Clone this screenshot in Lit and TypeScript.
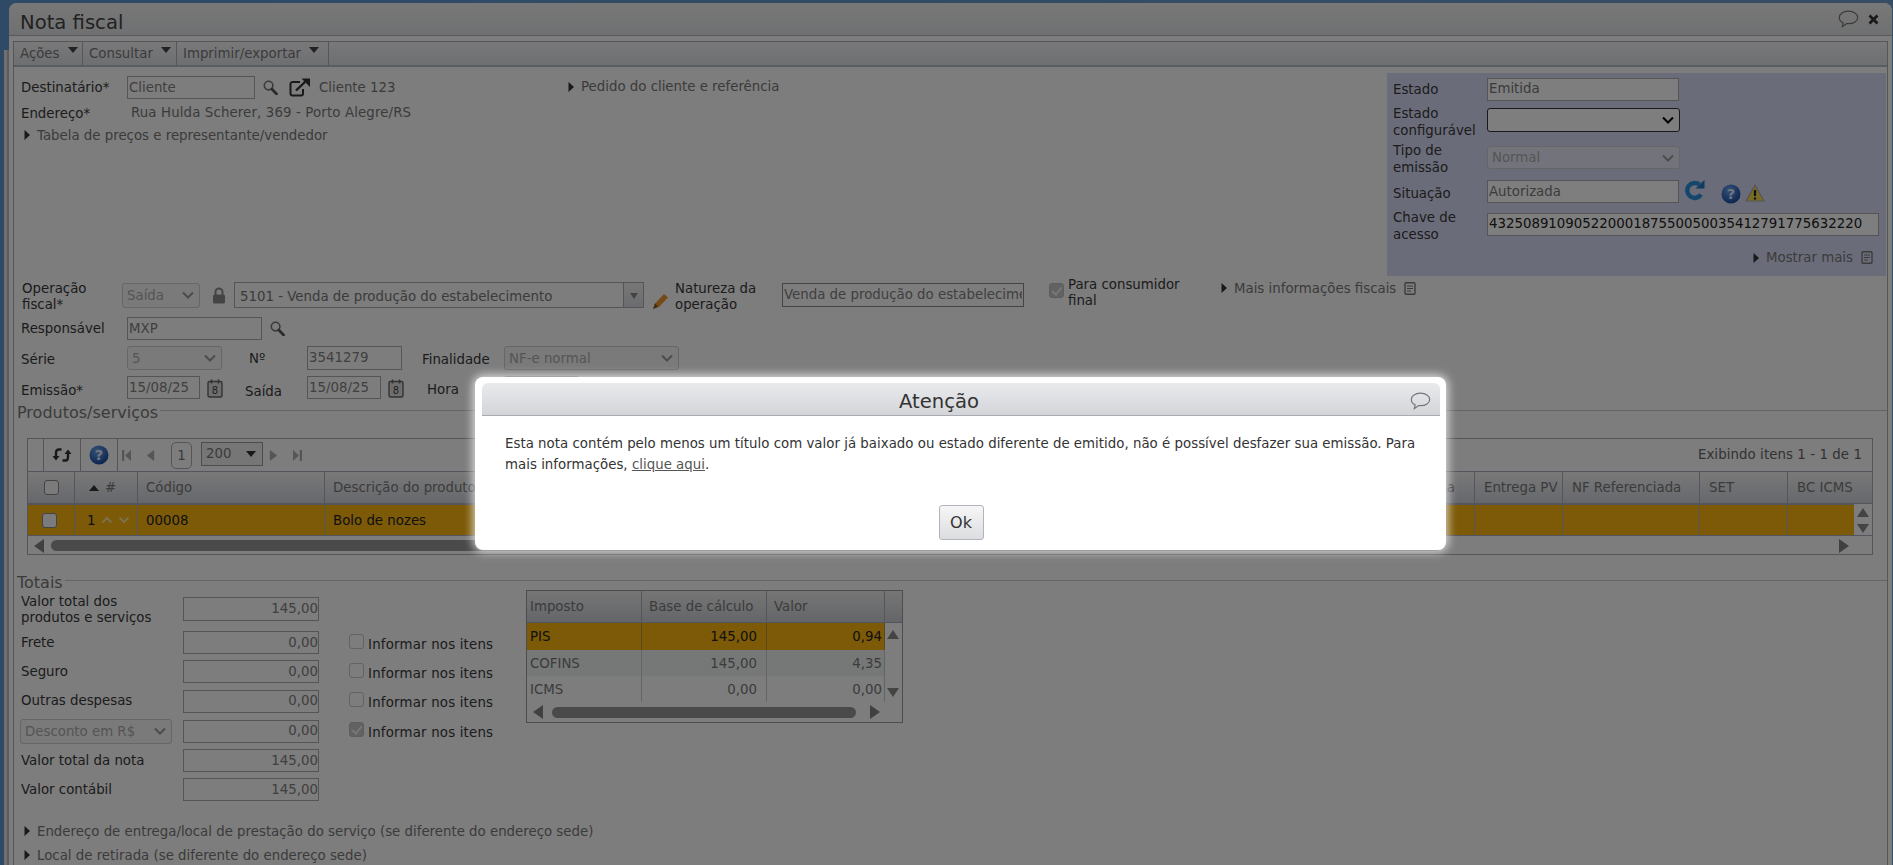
import { LitElement, html, css } from "lit";
import { customElement } from "lit/decorators.js";

const tri = html`<svg class="tri" viewBox="0 0 6 10"><path d="M0.5 0 L6 5 L0.5 10Z" /></svg>`;
const search = html`<svg class="search" viewBox="0 0 15 15"><circle cx="5.6" cy="5.6" r="4.3" fill="none" stroke="#777" stroke-width="1.6" /><path d="M8.8 9 L13.6 14" stroke="#555" stroke-width="2.6" stroke-linecap="round" /></svg>`;
const doc = html`<svg class="doc" viewBox="0 0 12 13"><rect x="1" y="0.8" width="10" height="11.4" rx="1" fill="none" stroke="#777" stroke-width="1.4" /><path d="M3 4h6M3 6.5h6M3 9h4" stroke="#777" stroke-width="1.1" /></svg>`;
const cal = html`<svg class="cal" viewBox="0 0 16 19"><rect x="1" y="2.5" width="14" height="15.5" rx="1.5" fill="#ddd" stroke="#666" stroke-width="1.4" /><path d="M4.5 0.5v4M11.5 0.5v4" stroke="#666" stroke-width="1.6" /><text x="8" y="15" text-anchor="middle" font-size="10" font-family="DejaVu Sans" fill="#444">8</text></svg>`;
const bubble = html`<svg class="bubble" viewBox="0 0 21 18"><path d="M10.500 1.200C5.400 1.200 1.300 3.800 1.300 7.500c0 2.400 1.600 4.300 3.800 5.400l-0.800 3.700 4.400-3c.6.100 1.200.1 1.800.1 5.100 0 9.200-2.700 9.200-6.200S15.600 1.200 10.500 1.200z" fill="none" stroke="#777" stroke-width="1.200" /></svg>`;
const gridArrow = (d: string, cls: string) => html`<svg class=${cls} viewBox="0 0 10 10" preserveAspectRatio="none"><path d=${d} /></svg>`;

@customElement("app-root")
export class AppRoot extends LitElement {
  static styles = css`
    :host { display: block; width: 1893px; height: 865px; overflow: hidden; position: relative; font-family: "DejaVu Sans", sans-serif; font-size: 13.33px; color: #3a3a3a; }
    * { box-sizing: border-box; }
    .page { height: 865px; padding: 3px 1px 0 9px; background: linear-gradient(90deg, #5f94cc 0, #5f94cc 4px, #e0e0e0 4px, #e0e0e0 7px, #b8b8b8 7px, #b8b8b8 9px) 0 50px / 9px 100% no-repeat, linear-gradient(90deg, #5c94cc, #6f9bc8); }
    .window { height: 862px; background: #fafafa; border-radius: 8px 8px 0 0; display: flex; flex-direction: column; }
    .titlebar { height: 33px; flex: none; display: flex; align-items: center; justify-content: space-between; padding: 6px 13px 0 11px; background: linear-gradient(#f0f0f0, #dfe0e3); border-bottom: 1px solid #b0b3b8; border-radius: 8px 8px 0 0; }
    .title { font-size: 19.6px; color: #444; }
    .winicons { display: flex; align-items: center; gap: 9px; margin-top: -6px; }
    .bubble { width: 21px; height: 18px; display: block; }
    .x { width: 11px; height: 11px; display: block; }
    .content { flex: 1; margin: 5px 4px 0; border: 1px solid #aaadb4; border-bottom: 0; overflow: hidden; }
    .menubar { height: 25px; display: flex; background: linear-gradient(#f2f2f4, #dcdee2); border-bottom: 2px solid #b4b9c8; }
    .menu { display: flex; align-items: center; padding: 0 0 0 6px; border-right: 1px solid #a8acb6; color: #777; }
    .m1 { width: 69px; } .m2 { width: 94px; } .m3 { width: 152px; }
    .caret { width: 0; height: 0; border: 5px solid transparent; border-top: 6px solid #444; margin: -2px 0 0 8px; }
    input, select { font-family: "DejaVu Sans", sans-serif; font-size: 13.33px; }
    input { height: 23px; border: 1px solid #aaa; background: transparent; color: #808080; padding: 0 1px 1px; border-radius: 0; outline: 0; display: block; }
    select { display: block; color: #aaa; padding: 0 0 0 4px; height: 25px; appearance: none; -webkit-appearance: none; border: 1px solid #ccc; border-radius: 3px; background: #f4f4f4 url("data:image/svg+xml,%3Csvg xmlns='http://www.w3.org/2000/svg' width='12' height='8'%3E%3Cpath d='M1 1.500 6 6.500 11 1.500' fill='none' stroke='%23999' stroke-width='2'/%3E%3C/svg%3E") no-repeat right 5px center; opacity: 1; }
    .top { display: flex; height: 203px; margin: 6px 1px 0 0; }
    .topleft { flex: 1; padding: 3px 0 0 7px; }
    .row { display: flex; align-items: center; }
    .rowdest { height: 23px; }
    .destgroup { display: flex; align-items: center; width: 547px; }
    .lbl { width: 106px; flex: none; color: #383838; line-height: 16px; }
    .val { color: #777; }
    .icon-gap { margin-left: 8px; }
    .search { width: 15px; height: 15px; display: block; }
    .open { width: 21px; height: 19px; margin: 0 9px 0 11px; display: block; }
    .tri { width: 6px; height: 10px; flex: none; display: block; fill: #333; margin-right: 7px; }
    .link { display: flex; align-items: center; color: #777; }
    .pedido { margin-top: -2px; }
    .rowaddr { height: 18px; margin-top: 5px; }
    .rowaddr .lbl { padding-top: 2px; }
    .addr { margin: -1px 0 0 4px; letter-spacing: 0.13px; }
    .rowtab { height: 18px; margin: 4px 0 0 3px; }
    .w128 { width: 128px; } .w135 { width: 135px; } .w95 { width: 95px; } .w73 { width: 73px; } .w74 { width: 74px; }
    .panel { width: 499px; flex: none; background: #d6d9f2; display: grid; grid-template-columns: 94px 1fr; grid-template-rows: 30px 32px 43px 25px 40px 1fr; padding: 1px 0 0 6px; align-items: center; }
    .panel .lbl { line-height: 17px; padding-top: 3px; }
    .panel .lbl.one { padding-top: 1px; }
    .panel input { background: #fcfcfe; width: 192px; color: #777; }
    .panel select { width: 193px; }
    .panel select.on { height: 24px; border: 1px solid #333; border-radius: 3px; color: #000; background-color: #fcfcfe; background-image: url("data:image/svg+xml,%3Csvg xmlns='http://www.w3.org/2000/svg' width='12' height='8'%3E%3Cpath d='M1 1.500 6 6.500 11 1.500' fill='none' stroke='%23000' stroke-width='2'/%3E%3C/svg%3E"); }
    .panel select.off { height: 23px; background-color: #e6e8f6; }
    .panel .key { width: 392px; color: #222; }
    .sit { display: flex; align-items: center; }
    .refresh { width: 21px; height: 21px; margin: -3px 0 0 5px; display: block; }
    .help { width: 20px; height: 20px; display: block; }
    .sit .help { margin: 4px 0 0 16px; }
    .warn { width: 20px; height: 18px; margin: 2px 0 0 4px; display: block; }
    .more { grid-column: 1 / 3; justify-self: end; align-self: start; margin: 6px 13px 0 0; display: flex; align-items: center; }
    .doc { width: 12px; height: 13px; display: block; margin-left: 8px; }
    .rowop { height: 26px; margin: 6px 0 0 7px; }
    .rowop .lbl { padding-top: 3px; }
    .oplbl { padding-left: 1px; width: 101px; }
    .saida { width: 78px; height: 25px; }
    .lock { width: 14px; height: 17px; margin: 0 8px 0 12px; display: block; }
    .combo { width: 410px; height: 26px; border: 1px solid #aaa; display: flex; background: #fafafa; }
    .combotxt { flex: 1; padding: 2px 5px 0; display: flex; align-items: center; color: #777; }
    .comboarrow { width: 20px; border-left: 1px solid #aaa; background: linear-gradient(#eee, #d8dae0); display: flex; align-items: center; justify-content: center; }
    .comboarrow i { border: 4px solid transparent; border-top: 6px solid #888; margin-top: 5px; }
    .pencil { width: 18px; height: 17px; margin: 12px 5px 0 8px; display: block; }
    .natlbl { width: 107px; color: #383838; line-height: 16px; padding-top: 3px; }
    .natinput { width: 242px; height: 24px; color: #808080; border-color: #888; }
    .chk { width: 15px; height: 15px; flex: none; border: 1px solid #888; border-radius: 3px; background: #f6f6f6; display: block; }
    .chk.dis { border-color: #c4c4c4; background: transparent; }
    .chk.checked { background: #c4c4c4; border-color: #bbb; position: relative; }
    .chk.checked::after { content: ""; position: absolute; left: 4px; top: 1px; width: 4px; height: 8px; border: solid #efefef; border-width: 0 2px 2px 0; transform: rotate(40deg); }
    .chkwrap { margin: 2px 0 0 25px; display: flex; align-items: flex-start; }
    .consum { width: 152px; margin-left: 4px; line-height: 16px; margin-top: -6px; color: #383838; }
    .mais { margin: -14px 0 0 1px; }
    .rowresp { height: 23px; margin: 9px 0 0 7px; }
    .rowserie { height: 24px; margin: 6px 0 0 7px; }
    .rowserie .lbl, .rowserie .final { padding-top: 3px; }
    .serie { width: 95px; height: 24px; }
    .no { width: 58px; margin-left: 27px; color: #383838; }
    .input24 { height: 24px; }
    .final { width: 82px; margin-left: 20px; color: #383838; }
    .nfe { width: 175px; height: 24px; }
    .rowemis { height: 23px; margin: 6px 0 0 7px; }
    .rowemis .lbl { padding-top: 7px; }
    .cal { width: 16px; height: 19px; margin: 2px 0 0 7px; display: block; flex: none; }
    .saidalbl { margin-left: 22px; width: 62px; color: #383838; padding-top: 7px; }
    .hora { margin-left: 23px; width: 78px; color: #383838; padding-top: 3px; }
    .legend { height: 18px; display: flex; align-items: center; gap: 2px; color: #777; font-size: 16px; padding-left: 3px; }
    .legend hr { flex: 1; height: 1px; border: 0; margin: -3px 0 0; background: #c8c8c8; }
    .lg1 { margin-top: 4px; }
    .lg2 { margin-top: 18px; }
    .grid { width: 1846px; height: 117px; margin: 17px 0 0 13px; border: 1px solid #aaa; }
    .gtool { height: 32px; display: flex; align-items: stretch; position: relative; }
    .gsep { width: 37px; border-left: 1px solid #aaa; display: flex; align-items: center; justify-content: center; flex: none; }
    .gsep0 { width: 15px; flex: none; }
    .gsync { width: 18px; height: 16px; display: block; }
    .ghelp { width: 20px; height: 20px; display: block; }
    .pg { display: flex; align-items: center; border-left: 1px solid #aaa; padding-left: 4px; flex: 1; }
    .pgicon { width: 9px; height: 11px; fill: #aaa; display: block; flex: none; }
    .mr { margin-right: 15px; }
    .pgbox { width: 21px; height: 27px; border: 1px solid #aaa; border-radius: 5px; display: flex; align-items: center; justify-content: center; color: #777; margin: 0 9px 0 16px; }
    .pgsel { width: 62px; height: 24px; border: 1px solid #999; display: flex; align-items: center; justify-content: space-between; padding: 0 6px 2px 4px; color: #777; margin: -2px 6px 0 0; background: #ececec; }
    .pgsel i { border: 5px solid transparent; border-top: 6px solid #333; margin-top: 6px; }
    .count { margin: 0 10px 0 auto; color: #666; padding-bottom: 1px; letter-spacing: 0.08px; }
    .ghead, .grow { display: flex; }
    .ghead { height: 33px; background: linear-gradient(#f2f2f2, #ccd0d8); border-top: 1px solid #aab; border-bottom: 1px solid #aab; color: #777; }
    .grow { height: 32px; background: #f8b410; color: #222; }
    .cell { flex: none; border-right: 1px solid #b0a080; display: flex; align-items: center; padding-left: 8px; overflow: hidden; white-space: nowrap; }
    .ghead .cell { border-right-color: #aab; }
    .c0 { width: 47px; padding-left: 16px; }
    .grow .c0 { padding-left: 14px; }
    .c1 { width: 63px; }
    .c2 { width: 187px; }
    .c3 { width: 1005px; }
    .c4 { width: 145px; justify-content: flex-end; padding-right: 19px; }
    .c5 { width: 88px; padding-left: 9px; }
    .c6 { width: 137px; padding-left: 9px; }
    .c7 { width: 88px; padding-left: 9px; }
    .c8 { width: 66px; border-right: 0; padding-left: 9px; }
    .hfill { flex: 1; }
    .sorttri { width: 0; height: 0; border: 5px solid transparent; border-bottom: 6px solid #333; border-top: 0; margin: 1px 6px 0 6px; }
    .grow .c1 { padding-left: 12px; }
    .chev { width: 10px; height: 6px; margin-left: 7px; display: block; fill: none; stroke: #f4e6b4; stroke-width: 1.7; flex: none; }
    .vfill { flex: 1; position: relative; display: flex; flex-direction: column; align-items: center; gap: 7px; padding-top: 4px; background: #fafafa; margin-top: -1px; }
    .varrow { width: 12px; height: 9px; fill: #888; display: block; flex: none; }
    .gscroll { height: 19px; display: flex; align-items: center; position: relative; padding-left: 6px; }
    .harrow { width: 10px; height: 14px; fill: #808080; display: block; flex: none; }
    .thumb { height: 11px; background: #949494; border-radius: 6px; flex: none; }
    .t1 { width: 1390px; margin: 0 398px 0 7px; }
    .t2 { width: 304px; margin: 0 14px 0 9px; }
    .totals { display: flex; margin: -1px 0 0 7px; position: relative; height: 224px; }
    .tform { display: grid; grid-template-columns: 162px 136px 30px 177px; grid-template-rows: 30px 29px 29px 30px 30px 29px 29px; align-items: center; padding-top: 8px; height: 221px; }
    .tform .lbl { width: auto; }
    .tform input { width: 136px; height: 23px; text-align: right; padding-right: 0; }
    .first { align-self: start; margin-top: -4px; }
    .tform input.first { height: 24px; margin-top: -1px; }
    .inf { display: flex; align-items: center; gap: 4px; color: #383838; padding-top: 3px; white-space: nowrap; letter-spacing: 0.2px; }
    .inf .chk { margin-top: -6px; }
    .tdisc { width: 152px; height: 25px; margin-left: -1px; }
    .mini { width: 377px; height: 133px; border: 1px solid #999; flex: none; }
    .mhead, .mrow { display: flex; }
    .mhead { height: 32px; background: linear-gradient(#ececec, #c8ccd2); border-bottom: 1px solid #aab; color: #777; }
    .mrow { height: 26px; color: #777; }
    .mrows { display: flex; }
    .mleft { width: 357px; }
    .mcell { flex: none; border-right: 1px solid #c8c8c8; display: flex; align-items: center; padding: 0 5px 0 3px; }
    .mhead .mcell { border-right-color: #aab; }
    .m0 { width: 115px; } .m1c { width: 125px; justify-content: flex-end; padding-right: 9px; } .m2c { width: 118px; justify-content: flex-end; padding-right: 2px; }
    .mhead .m1c, .mhead .m2c { justify-content: flex-start; padding-left: 7px; }
    .mrow.sel { background: #f8b410; color: #222; height: 27px; }
    .mrow.sel .mcell { border-right-color: #b89030; }
    .mrow.alt { background: #edf0ee; }
    .mvs { flex: 1; display: flex; flex-direction: column; justify-content: space-between; align-items: center; padding: 7px 0 5px; height: 79px; }
    .mscroll { height: 20px; display: flex; align-items: center; padding-left: 6px; }
    .bottom { height: 18px; margin: 8px 0 0 10px; }
    .bottom2 { height: 18px; margin: 6px 0 0 10px; }
    .overlay { position: absolute; inset: 0; background: rgba(0, 0, 0, 0.5); }
    .dialog { position: absolute; left: 475px; top: 377px; width: 971px; height: 173px; background: #fff; border-radius: 8px; box-shadow: 0 0 10px 2px rgba(255, 255, 255, 0.75); padding: 6px 6px 0 7px; display: flex; flex-direction: column; }
    .dhead { height: 33px; flex: none; background: linear-gradient(#e9eaec, #d3d5d9); border-bottom: 1px solid #a8abb4; border-radius: 6px 6px 0 0; position: relative; display: flex; align-items: center; justify-content: center; font-size: 19.6px; color: #333; padding: 5px 44px 0 0; }
    .dbubble { position: absolute; right: 9px; top: 9px; }
    .dtext { padding: 17px 22px 0 23px; line-height: 21px; color: #333; height: 88px; letter-spacing: 0.02px; }
    .dtext a { color: #555; text-decoration: underline; }
    .dbtn { align-self: center; width: 45px; height: 35px; margin-top: 1px; border: 1px solid #b0b4bc; border-radius: 3px; background: linear-gradient(#f6f6f6, #dcdde0); display: flex; align-items: center; justify-content: center; font-family: "DejaVu Sans", sans-serif; font-size: 16px; color: #333; }
  `;

  private sync() {
    return html`<svg class="gsync" viewBox="0 0 18 16" fill="none" stroke="#333" stroke-width="2.400"><path d="M8.500 2.500H5.500C3.700 2.500 3 4 3 6v5" /><path d="M-0.500 9 3 13.500 6.500 9z" fill="#333" stroke="none" /><path d="M9.500 13.500h3c1.800 0 2.500-1.500 2.500-3.500V5" /><path d="M11.500 7 15 2.500 18.500 7z" fill="#333" stroke="none" /></svg>`;
  }

  private helpIcon(cls: string) {
    return html`<svg class=${cls} viewBox="0 0 20 20"><defs><radialGradient id="hg" cx="40%" cy="30%" r="75%"><stop offset="0" stop-color="#6da4ee" /><stop offset="1" stop-color="#12459e" /></radialGradient></defs><circle cx="10" cy="10" r="9.500" fill="url(#hg)" /><text x="10" y="15" text-anchor="middle" font-size="14" font-weight="bold" font-family="DejaVu Sans" fill="#e8eefa">?</text></svg>`;
  }

  render() {
    const totalRows = [
      { label: "Frete", value: "0,00" },
      { label: "Seguro", value: "0,00" },
      { label: "Outras despesas", value: "0,00" },
    ];
    return html`
      <div class="page">
        <div class="window">
          <div class="titlebar">
            <span class="title">Nota fiscal</span>
            <div class="winicons">
              ${bubble}
              <svg class="x" viewBox="0 0 11 11"><path d="M1.500 1.500l8 8M9.500 1.500l-8 8" stroke="#333" stroke-width="2.800" /></svg>
            </div>
          </div>
          <div class="content">
            <div class="menubar">
              <div class="menu m1">Ações<span class="caret"></span></div>
              <div class="menu m2">Consultar<span class="caret"></span></div>
              <div class="menu m3">Imprimir/exportar<span class="caret"></span></div>
            </div>

            <div class="top">
              <div class="topleft">
                <div class="row rowdest">
                  <div class="destgroup">
                    <span class="lbl">Destinatário*</span>
                    <input class="w128" value="Cliente" readonly />
                    <span class="icon-gap">${search}</span>
                    <svg class="open" viewBox="0 0 21 19" fill="none" stroke="#333" stroke-width="2"><path d="M11 4H3.500A2 2 0 0 0 1.500 6v9.500a2 2 0 0 0 2 2H12a2 2 0 0 0 2-2V11" /><path d="M7 12.500 17 3" stroke-width="2.400" /><path d="M12.500 0.500H21V9z" fill="#333" stroke="none" /></svg>
                    <span class="val">Cliente 123</span>
                  </div>
                  <span class="link pedido">${tri}Pedido do cliente e referência</span>
                </div>
                <div class="row rowaddr">
                  <span class="lbl">Endereço*</span>
                  <span class="val addr">Rua Hulda Scherer, 369 - Porto Alegre/RS</span>
                </div>
                <div class="row rowtab link">${tri}Tabela de preços e representante/vendedor</div>
              </div>
              <div class="panel">
                <span class="lbl one">Estado</span>
                <input value="Emitida" readonly />
                <span class="lbl">Estado<br />configurável</span>
                <select class="on"><option></option></select>
                <span class="lbl">Tipo de<br />emissão</span>
                <select class="off" disabled><option>Normal</option></select>
                <span class="lbl">Situação</span>
                <div class="sit">
                  <input value="Autorizada" readonly />
                  <svg class="refresh" viewBox="0 0 21 21"><path d="M17 14.500A7.500 7.500 0 1 1 15.500 4.600" fill="none" stroke="#2b8fd8" stroke-width="4.500" /><path d="M11.500 8.500H20.500V0z" fill="#1f78c0" /></svg>
                  ${this.helpIcon("help")}
                  <svg class="warn" viewBox="0 0 20 18"><path d="M10 1 19 17H1z" fill="#f2d64a" stroke="#aaa" stroke-width="1.200" /><path d="M10 6v6" stroke="#222" stroke-width="2.200" /><circle cx="10" cy="14.500" r="1.200" fill="#222" /></svg>
                </div>
                <span class="lbl">Chave de<br />acesso</span>
                <input class="key" value="43250891090522000187550050035412791775632220" readonly />
                <div class="more link">${tri}Mostrar mais${doc}</div>
              </div>
            </div>

            <div class="row rowop">
              <span class="lbl oplbl">Operação<br />fiscal*</span>
              <select class="saida" disabled><option>Saída</option></select>
              <svg class="lock" viewBox="0 0 14 17"><path d="M3.500 8V5a3.500 3.500 0 0 1 7 0v3" fill="none" stroke="#888" stroke-width="2" /><rect x="1" y="7.500" width="12" height="9" rx="1.500" fill="#888" /></svg>
              <div class="combo">
                <span class="combotxt">5101 - Venda de produção do estabelecimento</span>
                <span class="comboarrow"><i></i></span>
              </div>
              <svg class="pencil" viewBox="0 0 18 17"><path d="M1 16 3 10.500 12 1l4 3.500-9 9.500z" fill="#e8962e" /><path d="M1 16 3 10.500 6 13.500z" fill="#7a5a2a" /></svg>
              <span class="natlbl">Natureza da<br />operação</span>
              <input class="natinput" value="Venda de produção do estabelecimento" readonly />
              <div class="chkwrap">
                <span class="chk checked"></span>
                <span class="consum">Para consumidor<br />final</span>
              </div>
              <div class="link mais">${tri}Mais informações fiscais${doc}</div>
            </div>

            <div class="row rowresp">
              <span class="lbl">Responsável</span>
              <input class="w135" value="MXP" readonly />
              <span class="icon-gap">${search}</span>
            </div>

            <div class="row rowserie">
              <span class="lbl">Série</span>
              <select class="serie" disabled><option>5</option></select>
              <span class="no">Nº</span>
              <input class="w95 input24" value="3541279" readonly />
              <span class="final">Finalidade</span>
              <select class="nfe" disabled><option>NF-e normal</option></select>
            </div>

            <div class="row rowemis">
              <span class="lbl">Emissão*</span>
              <input class="w73" value="15/08/25" readonly />
              ${cal}
              <span class="saidalbl">Saída</span>
              <input class="w74" value="15/08/25" readonly />
              ${cal}
              <span class="hora">Hora</span>
              <input class="w73" readonly />
            </div>

            <div class="legend lg1">Produtos/serviços<hr /></div>

            <div class="grid">
              <div class="gtool">
                <span class="gsep0"></span>
                <span class="gsep">${this.sync()}</span>
                <span class="gsep">${this.helpIcon("ghelp")}</span>
                <div class="pg">
                  ${gridArrow("M0 0h2.500v10H0zM10 0v10L3.500 5z", "pgicon mr")}
                  ${gridArrow("M9 0v10L1 5z", "pgicon")}
                  <span class="pgbox">1</span>
                  <span class="pgsel">200<i></i></span>
                  ${gridArrow("M1 0v10l8-5z", "pgicon mr")}
                  ${gridArrow("M0 0v10l6.500-5zM7.500 0H10v10H7.500z", "pgicon")}
                  <span class="count">Exibindo itens 1 - 1 de 1</span>
                </div>
              </div>
              <div class="ghead">
                <span class="cell c0"><span class="chk"></span></span>
                <span class="cell c1"><span class="sorttri"></span>#</span>
                <span class="cell c2">Código</span>
                <span class="cell c3">Descrição do produto</span>
                <span class="cell c4">Entrega</span>
                <span class="cell c5">Entrega PV</span>
                <span class="cell c6">NF Referenciada</span>
                <span class="cell c7">SET</span>
                <span class="cell c8">BC ICMS</span>
                <span class="hfill"></span>
              </div>
              <div class="ghead grow">
                <span class="cell c0"><span class="chk"></span></span>
                <span class="cell c1">1
                  <svg class="chev" viewBox="0 0 10 6"><path d="M0.500 5.500 5 1l4.500 4.500" /></svg>
                  <svg class="chev" viewBox="0 0 10 6"><path d="M0.500 0.500 5 5l4.500-4.500" /></svg>
                </span>
                <span class="cell c2">00008</span>
                <span class="cell c3">Bolo de nozes</span>
                <span class="cell c4"></span>
                <span class="cell c5"></span>
                <span class="cell c6"></span>
                <span class="cell c7"></span>
                <span class="cell c8"></span>
                <div class="vfill">
                  ${gridArrow("M5 0 10 10H0z", "varrow")}
                  ${gridArrow("M5 10 10 0H0z", "varrow")}
                </div>
              </div>
              <div class="gscroll">
                ${gridArrow("M10 0v10L0 5z", "harrow")}
                <span class="thumb t1"></span>
                ${gridArrow("M0 0v10l10-5z", "harrow")}
              </div>
            </div>

            <div class="legend lg2">Totais<hr /></div>

            <div class="totals">
              <div class="tform">
                <span class="lbl first">Valor total dos<br />produtos e serviços</span>
                <input class="first" value="145,00" readonly />
                <span></span><span></span>
                ${totalRows.map(
                  (r) => html`
                    <span class="lbl">${r.label}</span>
                    <input value=${r.value} readonly />
                    <span></span>
                    <span class="inf"><span class="chk dis"></span>Informar nos itens</span>
                  `
                )}
                <select class="tdisc" disabled><option>Desconto em R$</option></select>
                <input value="0,00" readonly />
                <span></span>
                <span class="inf"><span class="chk checked"></span>Informar nos itens</span>
                <span class="lbl">Valor total da nota</span>
                <input value="145,00" readonly />
                <span></span><span></span>
                <span class="lbl">Valor contábil</span>
                <input value="145,00" readonly />
                <span></span><span></span>
              </div>
              <div class="mini">
                <div class="mhead">
                  <span class="mcell m0">Imposto</span>
                  <span class="mcell m1c">Base de cálculo</span>
                  <span class="mcell m2c">Valor</span>
                </div>
                <div class="mrows">
                  <div class="mleft">
                    <div class="mrow sel"><span class="mcell m0">PIS</span><span class="mcell m1c">145,00</span><span class="mcell m2c">0,94</span></div>
                    <div class="mrow alt"><span class="mcell m0">COFINS</span><span class="mcell m1c">145,00</span><span class="mcell m2c">4,35</span></div>
                    <div class="mrow"><span class="mcell m0">ICMS</span><span class="mcell m1c">0,00</span><span class="mcell m2c">0,00</span></div>
                  </div>
                  <div class="mvs">
                    ${gridArrow("M5 0 10 10H0z", "varrow")}
                    ${gridArrow("M5 10 10 0H0z", "varrow")}
                  </div>
                </div>
                <div class="mscroll">
                  ${gridArrow("M10 0v10L0 5z", "harrow")}
                  <span class="thumb t2"></span>
                  ${gridArrow("M0 0v10l10-5z", "harrow")}
                </div>
              </div>
            </div>

            <div class="row bottom link">${tri}Endereço de entrega/local de prestação do serviço (se diferente do endereço sede)</div>
            <div class="row bottom2 link">${tri}Local de retirada (se diferente do endereço sede)</div>
          </div>
        </div>
      </div>

      <div class="overlay"></div>
      <div class="dialog">
        <div class="dhead">Atenção<span class="dbubble">${bubble}</span></div>
        <div class="dtext">Esta nota contém pelo menos um título com valor já baixado ou estado diferente de emitido, não é possível desfazer sua emissão. Para mais informações, <a>clique aqui</a>.</div>
        <button class="dbtn">Ok</button>
      </div>
    `;
  }
}
